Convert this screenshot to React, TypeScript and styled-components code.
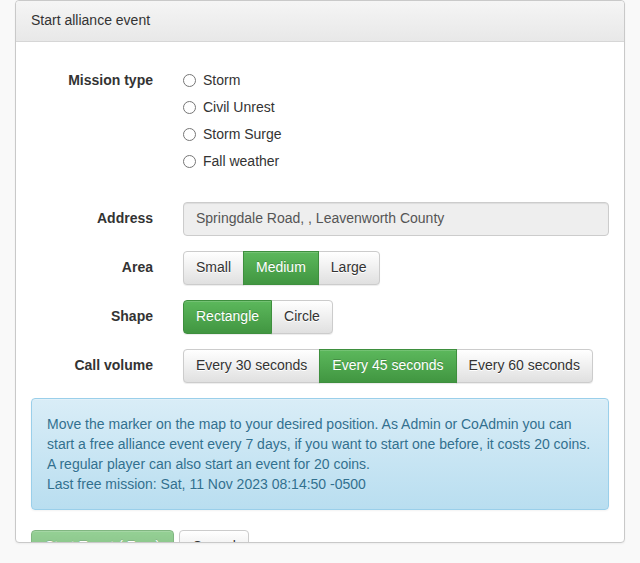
import React, { useState } from "react";
import styled, { createGlobalStyle, css } from "styled-components";

const GlobalStyle = createGlobalStyle`
  * { box-sizing: border-box; }
  html, body {
    margin: 0;
    padding: 0;
    background: #f9f9f9;
    font-family: "Liberation Sans", Arial, Helvetica, sans-serif;
    font-size: 14px;
    line-height: 20px;
    color: #333;
  }
`;

const Page = styled.div`
  padding: 0 15px 20px;
`;

const Panel = styled.div`
  height: 543px;
  display: flex;
  flex-direction: column;
  overflow: hidden;
  background: #fff;
  border: 1px solid #c9c9c9;
  border-radius: 4px;
  box-shadow: 0 1px 2px rgba(0, 0, 0, 0.05);
`;

const PanelHeading = styled.div`
  padding: 9px 15px 11px;
  color: #333;
  background-image: linear-gradient(to bottom, #f5f5f5 0, #e8e8e8 100%);
  border-bottom: 1px solid #d6d6d6;
  border-radius: 3px 3px 0 0;
`;

const PanelBody = styled.div`
  flex: 1;
  overflow: hidden;
  padding: 21px 15px 15px;
`;

const FormGroup = styled.div<{ $gap?: number }>`
  display: flex;
  margin: 0 -15px ${(p) => p.$gap ?? 15}px;
`;

const LabelCol = styled.label<{ $top?: number }>`
  width: 152px;
  flex: none;
  padding: ${(p) => p.$top ?? 6}px 15px 0;
  text-align: right;
  font-weight: bold;
`;

const ControlCol = styled.div`
  flex: 1;
  padding: 0 15px;
`;

const RadioRow = styled.div`
  position: relative;
  padding-top: 7px;
  min-height: 27px;

  label {
    display: block;
    padding-left: 20px;
    cursor: pointer;
  }

  input {
    position: absolute;
    margin: 4px 0 0 -20px;
    width: 13px;
    height: 13px;
  }
`;

const ReadonlyInput = styled.div`
  height: 34px;
  padding: 5px 12px 7px;
  color: #555;
  background: #eee;
  border: 1px solid #ccc;
  border-radius: 4px;
  box-shadow: inset 0 1px 1px rgba(0, 0, 0, 0.075);
`;

const ButtonGroup = styled.div`
  display: inline-flex;

  & > button {
    border-radius: 0;
  }
  & > button + button {
    margin-left: -1px;
  }
  & > button:first-child {
    border-radius: 4px 0 0 4px;
  }
  & > button:last-child {
    border-radius: 0 4px 4px 0;
  }
`;

const Button = styled.button<{ $success?: boolean; $faded?: boolean }>`
  position: relative;
  height: 34px;
  padding: 5px 12px 7px;
  font: inherit;
  line-height: 20px;
  white-space: nowrap;
  border: 1px solid #ccc;
  border-radius: 4px;
  color: #333;
  background-image: linear-gradient(to bottom, #fff 0, #e0e0e0 100%);
  text-shadow: 0 1px 0 #fff;
  box-shadow: inset 0 1px 0 rgba(255, 255, 255, 0.15), 0 1px 1px rgba(0, 0, 0, 0.075);
  cursor: pointer;

  ${(p) =>
    p.$success &&
    css`
      z-index: 1;
      color: #fff;
      border-color: #3e8f3e;
      background-image: linear-gradient(to bottom, #5cb85c 0, #419641 100%);
      text-shadow: 0 -1px 0 rgba(0, 0, 0, 0.2);
    `}

  ${(p) =>
    p.$faded &&
    css`
      opacity: 0.65;
      padding: 5px 13px 7px;
      cursor: not-allowed;
    `}
`;

const InfoAlert = styled.div`
  margin-bottom: 20px;
  padding: 15px;
  color: #31708f;
  border: 1px solid #9acfea;
  border-radius: 4px;
  background-image: linear-gradient(to bottom, #d9edf7 0, #b9def0 100%);
  text-shadow: 0 1px 0 rgba(255, 255, 255, 0.2);
  box-shadow: inset 0 1px 0 rgba(255, 255, 255, 0.25), 0 1px 2px rgba(0, 0, 0, 0.05);
`;

const Actions = styled.div`
  display: flex;
  gap: 5px;
`;

const missionTypes = ["Storm", "Civil Unrest", "Storm Surge", "Fall weather"];
const areas = ["Small", "Medium", "Large"];
const shapes = ["Rectangle", "Circle"];
const volumes = ["Every 30 seconds", "Every 45 seconds", "Every 60 seconds"];

const Choice = ({
  options,
  value,
  onChange,
}: {
  options: string[];
  value: string;
  onChange: (v: string) => void;
}) => (
  <ButtonGroup>
    {options.map((o) => (
      <Button key={o} type="button" $success={o === value} onClick={() => onChange(o)}>
        {o}
      </Button>
    ))}
  </ButtonGroup>
);

const App = () => {
  const [mission, setMission] = useState("");
  const [area, setArea] = useState("Medium");
  const [shape, setShape] = useState("Rectangle");
  const [volume, setVolume] = useState("Every 45 seconds");

  return (
    <Page>
      <GlobalStyle />
      <Panel>
        <PanelHeading>Start alliance event</PanelHeading>
        <PanelBody>
          <FormGroup $gap={31}>
            <LabelCol $top={7}>Mission type</LabelCol>
            <ControlCol>
              {missionTypes.map((m) => (
                <RadioRow key={m}>
                  <label>
                    <input
                      type="radio"
                      name="mission"
                      checked={mission === m}
                      onChange={() => setMission(m)}
                    />
                    {m}
                  </label>
                </RadioRow>
              ))}
            </ControlCol>
          </FormGroup>

          <FormGroup>
            <LabelCol>Address</LabelCol>
            <ControlCol>
              <ReadonlyInput>Springdale Road, , Leavenworth County</ReadonlyInput>
            </ControlCol>
          </FormGroup>

          <FormGroup>
            <LabelCol>Area</LabelCol>
            <ControlCol>
              <Choice options={areas} value={area} onChange={setArea} />
            </ControlCol>
          </FormGroup>

          <FormGroup>
            <LabelCol>Shape</LabelCol>
            <ControlCol>
              <Choice options={shapes} value={shape} onChange={setShape} />
            </ControlCol>
          </FormGroup>

          <FormGroup>
            <LabelCol>Call volume</LabelCol>
            <ControlCol>
              <Choice options={volumes} value={volume} onChange={setVolume} />
            </ControlCol>
          </FormGroup>

          <InfoAlert>
            Move the marker on the map to your desired position. As Admin or CoAdmin you can
            start a free alliance event every 7 days, if you want to start one before, it costs
            20 coins.
            <br />
            A regular player can also start an event for 20 coins.
            <br />
            Last free mission: Sat, 11 Nov 2023 08:14:50 -0500
          </InfoAlert>

          <Actions>
            <Button type="button" $success $faded>
              Start Event ( Free)
            </Button>
            <Button type="button">Cancel</Button>
          </Actions>
        </PanelBody>
      </Panel>
    </Page>
  );
};

export default App;
